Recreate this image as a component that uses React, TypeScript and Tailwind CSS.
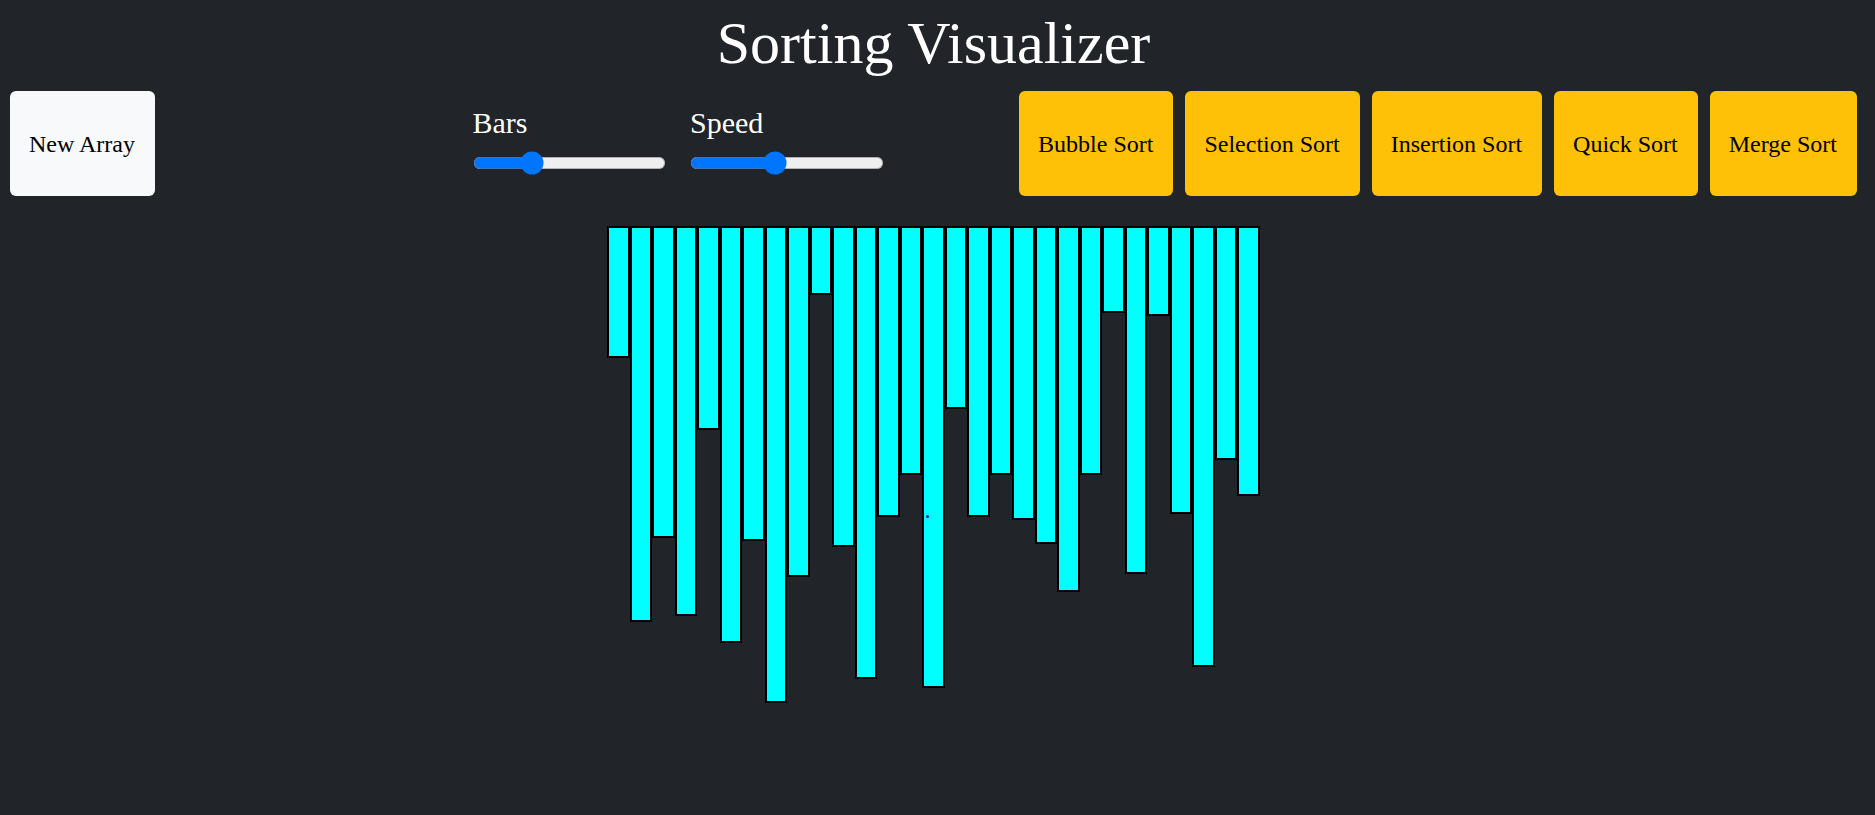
import { useState } from "react";

const INITIAL = [
  44, 132, 104, 130, 68, 139, 105, 159, 117, 23, 107, 151, 97, 83, 154, 61, 97,
  83, 98, 106, 122, 83, 29, 116, 30, 96, 147, 78, 90,
];

const SORTS = [
  "Bubble Sort",
  "Selection Sort",
  "Insertion Sort",
  "Quick Sort",
  "Merge Sort",
];

const BAR_WIDTH_VW = 1.2;
const PX_PER_UNIT = 3;
const MARKED_INDEX = 14;

function randomArray(count: number) {
  return Array.from({ length: count }, () => 20 + Math.floor(Math.random() * 140));
}

type SliderProps = {
  id: string;
  label: string;
  min: number;
  max: number;
  value: number;
  onChange: (value: number) => void;
};

function Slider({ id, label, min, max, value, onChange }: SliderProps) {
  return (
    <div className="flex flex-col gap-1.5">
      <label htmlFor={id} className="text-[30px] leading-[45px] text-white">
        {label}
      </label>
      <input
        id={id}
        type="range"
        min={min}
        max={max}
        value={value}
        onChange={(e) => onChange(Number(e.target.value))}
        className="w-[129px] [zoom:1.5]"
      />
    </div>
  );
}

export default function App() {
  const [values, setValues] = useState(INITIAL);
  const [count, setCount] = useState(INITIAL.length);
  const [speed, setSpeed] = useState(43);

  const resize = (next: number) => {
    setCount(next);
    setValues(randomArray(next));
  };

  return (
    <div className="min-h-screen bg-[#212529] pr-[18px] pl-[10px] font-['Liberation_Serif',serif]">
      <h1 className="pb-[5px] text-center text-[60px] leading-[86px] text-white">
        Sorting Visualizer
      </h1>

      <div className="grid grid-cols-[11fr_13fr_auto]">
        <div className="flex">
          <button
            type="button"
            onClick={() => setValues(randomArray(count))}
            className="h-[105px] rounded-md bg-[#f8f9fa] pr-5 pl-[19px] text-2xl whitespace-nowrap text-black"
          >
            New Array
          </button>
        </div>

        <div className="flex items-start gap-6 pt-[9px]">
          <Slider id="bars" label="Bars" min={5} max={90} value={count} onChange={resize} />
          <Slider id="speed" label="Speed" min={0} max={100} value={speed} onChange={setSpeed} />
        </div>

        <div className="flex gap-3">
          {SORTS.map((name) => (
            <button
              key={name}
              type="button"
              onClick={() => setValues([...values].sort((a, b) => a - b))}
              className="h-[105px] rounded-md bg-[#ffc107] pr-5 pl-[19px] text-2xl whitespace-nowrap text-black"
            >
              {name}
            </button>
          ))}
        </div>
      </div>

      <div
        className="mx-auto mt-[30px] flex items-start"
        style={{ width: `${values.length * BAR_WIDTH_VW}vw` }}
      >
        {values.map((value, i) => (
          <div
            key={i}
            className="relative flex-1 border-2 border-black bg-[#00ffff]"
            style={{ height: value * PX_PER_UNIT }}
          >
            {i === MARKED_INDEX && (
              <span className="absolute top-[287px] left-[2px] size-[3px] rounded-full bg-[#0000ff]" />
            )}
          </div>
        ))}
      </div>
    </div>
  );
}
